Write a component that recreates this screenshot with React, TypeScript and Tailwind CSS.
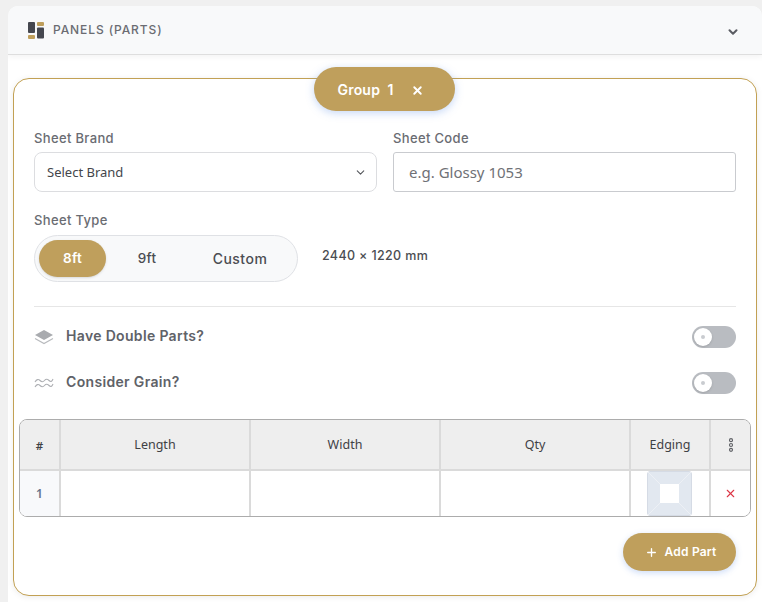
import { ChevronDown, Plus, X } from 'lucide-react';

const poppins = 'font-["Inter","Liberation_Sans",sans-serif]';
const segoe = 'font-["Noto_Sans","Open_Sans",sans-serif]';

function Toggle() {
  return (
    <div className="flex h-[22px] w-[44px] items-center rounded-full bg-[#b9bcc1] pl-[2px]">
      <div className="flex h-[18px] w-[18px] items-center justify-center rounded-full bg-white shadow">
        <div className="h-[4px] w-[4px] rounded-full bg-[#c9ccd0]" />
      </div>
    </div>
  );
}

function Segment() {
  return (
    <div className="flex h-[47px] w-[264px] items-center rounded-full border border-[#dfe1e5] bg-[#f8f9fa] pl-[4px] text-[13.5px] font-medium tracking-[0.3px] text-[#4b4d52]">
      <div className="flex h-[37px] w-[67px] items-center justify-center rounded-full bg-[#bf9f5c] font-semibold text-white shadow-sm">
        8ft
      </div>
      <div className="flex w-[82px] justify-center">9ft</div>
      <div className="flex w-[104px] justify-center text-[14px] tracking-[0.5px]">Custom</div>
    </div>
  );
}

export default function App() {
  return (
    <div className={`h-[602px] w-[762px] overflow-hidden bg-[#f0f0f0] pt-[6px] pl-[8px] ${poppins}`}>
      <div className="h-[596px] overflow-hidden rounded-t-[10px] bg-white">
        <div className="flex h-[49px] items-center justify-between border-b border-[#dedede] bg-[#f8f9fa] pr-[22px] pl-[20px] shadow-[0_2px_6px_rgba(0,0,0,0.05)]">
          <div className="flex items-center gap-[9px]">
            <svg width="16" height="17" viewBox="0 0 16 17">
              <rect x="0" y="0" width="7" height="11" rx="1" fill="#45474f" />
              <rect x="0" y="13" width="7" height="4" rx="1" fill="#bf9f5c" />
              <rect x="9" y="0" width="7" height="4" rx="1" fill="#bf9f5c" />
              <rect x="9" y="5.5" width="7" height="11" rx="1" fill="#45474f" />
            </svg>
            <span className="text-[12px] font-medium tracking-[0.9px] text-[#6a6c72]">PANELS (PARTS)</span>
          </div>
          <ChevronDown size={14} strokeWidth={3.5} className="mt-[3px] text-[#5b5d63]" />
        </div>

        <div className="ml-[5px] mt-[23px] h-[518px] w-[744px] rounded-[16px] border border-[#c2a154] bg-white px-[20px] shadow-[0_1px_6px_rgba(0,0,0,0.08)]">
          <div className="-mt-[12px] flex justify-center">
            <div className="mr-[2px] flex h-[44px] w-[141px] items-center rounded-full bg-[#bf9f5c] pl-[24px] text-[14px] font-semibold tracking-[0.2px] text-white shadow-[0_2px_8px_rgba(90,140,230,0.35)]">
              <span>Group&nbsp; 1</span>
              <X size={13} strokeWidth={3.5} className="ml-[17px] mt-[2px]" />
            </div>
          </div>

          <div className="mt-[18px] grid grid-cols-[343px_343px] gap-x-[16px] text-[#6a6c72]">
            <div>
              <div className="mb-[5px] h-[18px] text-[13px] font-medium leading-[18px] tracking-[0.35px]">Sheet Brand</div>
              <div className={`flex h-[40px] items-center justify-between rounded-[8px] border border-[#dcdde0] pl-[12px] pr-[9px] text-[13px] text-[#44464b] ${segoe}`}>
                <span className="mt-[1px]">Select Brand</span>
                <ChevronDown size={13} className="text-[#55575c]" />
              </div>
            </div>
            <div>
              <div className="mb-[5px] h-[18px] text-[13px] font-medium leading-[18px] tracking-[0.35px]">Sheet Code</div>
              <div className={`flex h-[40px] items-center rounded-[3px] border border-[#c9cbcf] pl-[15px] text-[15px] text-[#6f7176] ${segoe}`}>
                e.g. Glossy 1053
              </div>
            </div>
          </div>

          <div className="mt-[19px] h-[18px] text-[13px] font-medium leading-[18px] tracking-[0.35px] text-[#6a6c72]">Sheet Type</div>
          <div className="mt-[6px] flex items-center gap-[24px]">
            <Segment />
            <span className="mb-[4px] text-[12.5px] font-medium tracking-[0.35px] text-[#4b4d52]">2440 × 1220 mm</span>
          </div>

          <div className="mt-[24px] border-t border-[#e6e6e6]" />

          <div className="mt-[19px] flex h-[22px] items-center justify-between">
            <div className="flex items-center gap-[12px] text-[14px] font-semibold tracking-[0.33px] text-[#606268]">
              <svg width="20" height="16" viewBox="0 0 20 16">
                <path d="M10 1 L19 6 L10 11 L1 6 Z" fill="#a9abaf" />
                <path d="M1 9.5 L10 14.5 L19 9.5" fill="none" stroke="#b9bbbe" strokeWidth="1.2" />
              </svg>
              <span className="mb-[3px]">Have Double Parts?</span>
            </div>
            <Toggle />
          </div>

          <div className="mt-[24px] flex h-[22px] items-center justify-between">
            <div className="flex items-center gap-[12px] text-[14px] font-semibold tracking-[0.33px] text-[#606268]">
              <svg width="20" height="12" viewBox="0 0 20 12" fill="none" stroke="#aeb0b4" strokeWidth="1.1">
                <path d="M1 5 Q3.5 1 6 3.5 T10.5 3.5 T15 3.5 T19 2" />
                <path d="M1 10 Q3.5 6 6 8.5 T10.5 8.5 T15 8.5 T19 7" />
              </svg>
              <span className="mb-[3px]">Consider Grain?</span>
            </div>
            <Toggle />
          </div>

          <div className={`-mx-[15px] mt-[25px] w-[732px] overflow-hidden rounded-[8px] border border-[#acacac] text-[12.5px] text-[#3f4145] ${segoe}`}>
            <div className="grid h-[51px] grid-cols-[39px_190px_190px_190px_80px_41px] border-b-2 border-[#dadada] bg-[#eeeeee]">
              <div className="flex items-center justify-center pt-[2px] text-[11.5px] font-semibold">#</div>
              <div className="flex items-center justify-center border-l-2 border-[#dadada] pt-[2px]">Length</div>
              <div className="flex items-center justify-center border-l-2 border-[#dadada] pt-[2px]">Width</div>
              <div className="flex items-center justify-center border-l-2 border-[#dadada] pt-[2px]">Qty</div>
              <div className="flex items-center justify-center border-l-2 border-[#dadada] pt-[2px]">Edging</div>
              <div className="flex items-center justify-center border-l-2 border-[#dadada]">
                <svg width="6" height="14" viewBox="0 0 6 14" fill="none" stroke="#5f6166" strokeWidth="1.2">
                  <circle cx="3" cy="2.2" r="1.5" />
                  <circle cx="3" cy="7" r="1.5" />
                  <circle cx="3" cy="11.8" r="1.5" />
                </svg>
              </div>
            </div>
            <div className="grid h-[45px] grid-cols-[39px_190px_190px_190px_80px_41px] bg-white">
              <div className="flex items-center justify-center bg-[#f8f9fb] text-[12px] font-semibold text-[#64748b]">1</div>
              <div className="border-l-2 border-[#dadada]" />
              <div className="border-l-2 border-[#dadada]" />
              <div className="border-l-2 border-[#dadada]" />
              <div className="flex items-center justify-center border-l-2 border-[#dadada] pr-[2px]">
                <div className="relative flex h-[45px] w-[45px] items-center justify-center rounded-[3px] border border-[#d5dbe5] bg-[#e2e8f0]">
                  <svg className="absolute inset-0 h-full w-full" viewBox="0 0 45 45" stroke="#edf0f5" strokeWidth="1">
                    <path d="M0 0 L45 45 M45 0 L0 45" />
                  </svg>
                  <div className="relative h-[19px] w-[19px] bg-white" />
                </div>
              </div>
              <div className="flex items-center justify-center border-l-2 border-[#dadada]">
                <X size={13} strokeWidth={2} color="#dc3545" />
              </div>
            </div>
          </div>

          <div className="mt-[16px] flex justify-end">
            <div className="flex h-[38px] w-[113px] items-center justify-center gap-[7px] rounded-full bg-[#bf9f5c] pl-[2px] text-[12px] font-semibold tracking-[0.2px] text-white shadow-[0_2px_6px_rgba(90,140,230,0.3)]">
              <Plus size={13} strokeWidth={2.5} />
              Add Part
            </div>
          </div>
        </div>
      </div>
    </div>
  );
}
